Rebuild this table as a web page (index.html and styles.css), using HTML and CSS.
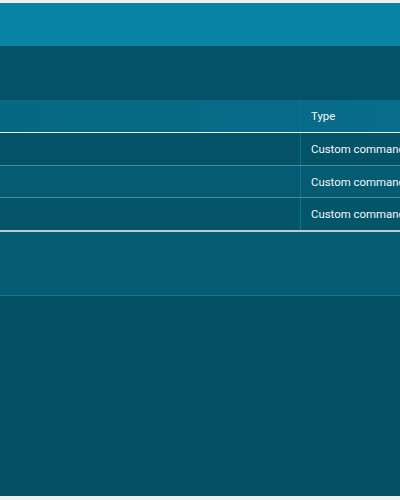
FILE: index.html
```html
<!DOCTYPE html>
<html>
<head>
<meta charset="utf-8">
<link rel="stylesheet" href="styles.css">
</head>
<body>
<div class="app">
  <div class="topbar"></div>
  <div class="toolbar"></div>
  <div class="table">
    <div class="row head">
      <div class="cell name"></div>
      <div class="cell type">Type</div>
    </div>
    <div class="row r1">
      <div class="cell name"></div>
      <div class="cell type">Custom command</div>
    </div>
    <div class="row r2">
      <div class="cell name"></div>
      <div class="cell type">Custom command</div>
    </div>
    <div class="row r3">
      <div class="cell name"></div>
      <div class="cell type">Custom command</div>
    </div>
  </div>
  <div class="band"></div>
  <div class="rest"></div>
</div>
</body>
</html>
```
FILE: styles.css
```css
html, body {
  margin: 0;
  padding: 0;
  background: #eef0ef;
  overflow: hidden;
}
body {
  padding-top: 3px;
  font-family: Roboto, "Noto Sans", sans-serif;
}
.app {
  height: 493px;
  display: flex;
  flex-direction: column;
  background: #044f63;
  overflow: hidden;
  width: 400px;
}
.topbar {
  height: 43px;
  background: #0a84a4;
  flex: none;
}
.toolbar {
  height: 54px;
  background: #04516a;
  flex: none;
}
.table {
  flex: none;
  display: flex;
  flex-direction: column;
}
.row {
  display: grid;
  grid-template-columns: 301px 1fr;
  height: 32px;
  white-space: nowrap;
}
.cell {
  display: flex;
  align-items: center;
  overflow: hidden;
  font-size: 11.4px;
  font-weight: 400;
  color: #f2f9fb;
}
.cell.name {
  border-right: 1px solid #0a7592;
}
.cell.type {
  padding-left: 10px;
  overflow: visible;
}
.head {
  background: linear-gradient(90deg, #066882, #086d8a);
  border-bottom: 1px solid #e6f2f4;
}
.r1 {
  background: #045369;
  border-bottom: 1px solid #4a8c9c;
}
.r2 {
  background: #055b72;
  border-bottom: 1px solid #4a8c9c;
  height: 31px;
}
.r3 {
  background: #04546a;
  border-bottom: 2px solid #b5cdd3;
}
.band {
  flex: none;
  height: 63px;
  background: #055c73;
  border-bottom: 1px solid #0b7c98;
}
.rest {
  flex: 1;
  background: #044f63;
}
```
